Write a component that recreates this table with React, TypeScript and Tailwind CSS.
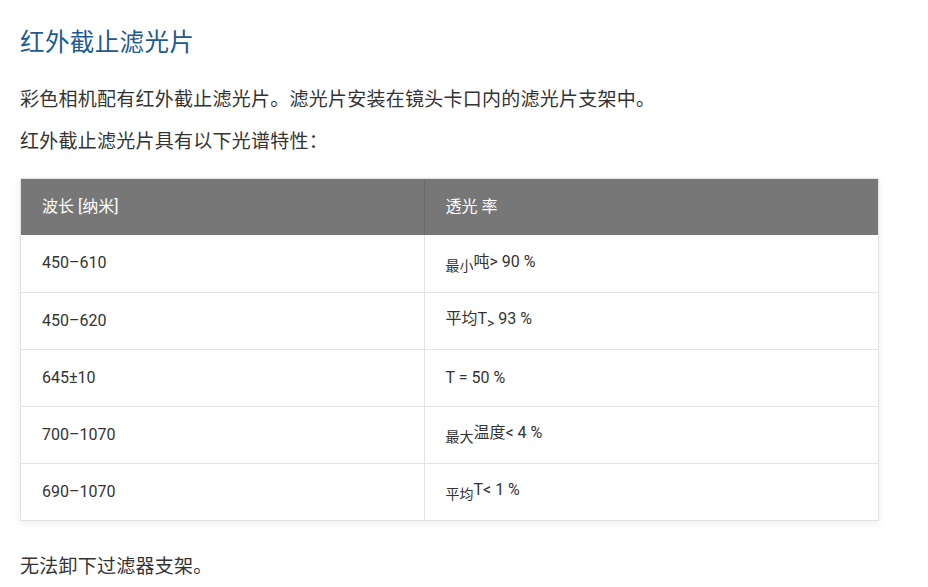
import type { ReactNode } from "react";

interface Row {
    wave: string;
    trans: ReactNode;
}

const low = "text-[14px] align-[-4px]";

const rows: Row[] = [
    { wave: "450–610", trans: <><span className={low}>最小</span>吨&gt; 90 %</> },
    { wave: "450–620", trans: <>平均T<span className={low}>&gt;</span> 93 %</> },
    { wave: "645±10", trans: <>T = 50 %</> },
    { wave: "700–1070", trans: <><span className={low}>最大</span>温度&lt; 4 %</> },
    { wave: "690–1070", trans: <><span className={low}>平均</span>T&lt; 1 %</> },
];

function App() {
    return (
        <div
            className="w-[928px] h-[587px] bg-white overflow-hidden px-5 pt-[26px] text-[#333] flex flex-col items-start"
            style={{ fontFamily: "Roboto, 'Noto Sans CJK SC', sans-serif" }}
        >
            <h1 className="text-[24.5px] leading-[34px] tracking-[0.4px] text-[#1d5a8e] mb-[26px]">红外截止滤光片</h1>
            <p className="text-[19px] leading-[28px] tracking-[0.25px] mb-[14px]">彩色相机配有红外截止滤光片。滤光片安装在镜头卡口内的滤光片支架中。</p>
            <p className="text-[19px] leading-[28px] tracking-[0.25px] mb-[22px]">红外截止滤光片具有以下光谱特性：</p>
            <div className="w-[859px] border border-[#e3e3e3] shadow-[0_2px_8px_rgba(0,0,0,0.08)]">
                <table className="w-full border-collapse text-[16px]">
                    <thead>
                        <tr className="bg-[#777777] text-white h-[56px]">
                            <th className="w-[403px] text-left font-normal pl-[21px] border-r border-[#6a6a6a]">波长 [纳米]</th>
                            <th className="text-left font-normal pl-[21px]">透光 率</th>
                        </tr>
                    </thead>
                    <tbody>
                        {rows.map((r, i) => (
                            <tr key={i} className={"h-[57px] " + (i > 0 ? "border-t border-[#e3e3e3]" : "")}>
                                <td className="pl-[21px] border-r border-[#e3e3e3]">{r.wave}</td>
                                <td className="pl-[21px]">{r.trans}</td>
                            </tr>
                        ))}
                    </tbody>
                </table>
            </div>
            <p className="text-[19px] leading-[28px] tracking-[0.25px] mt-[32px]">无法卸下过滤器支架。</p>
        </div>
    );
}

export default App;
